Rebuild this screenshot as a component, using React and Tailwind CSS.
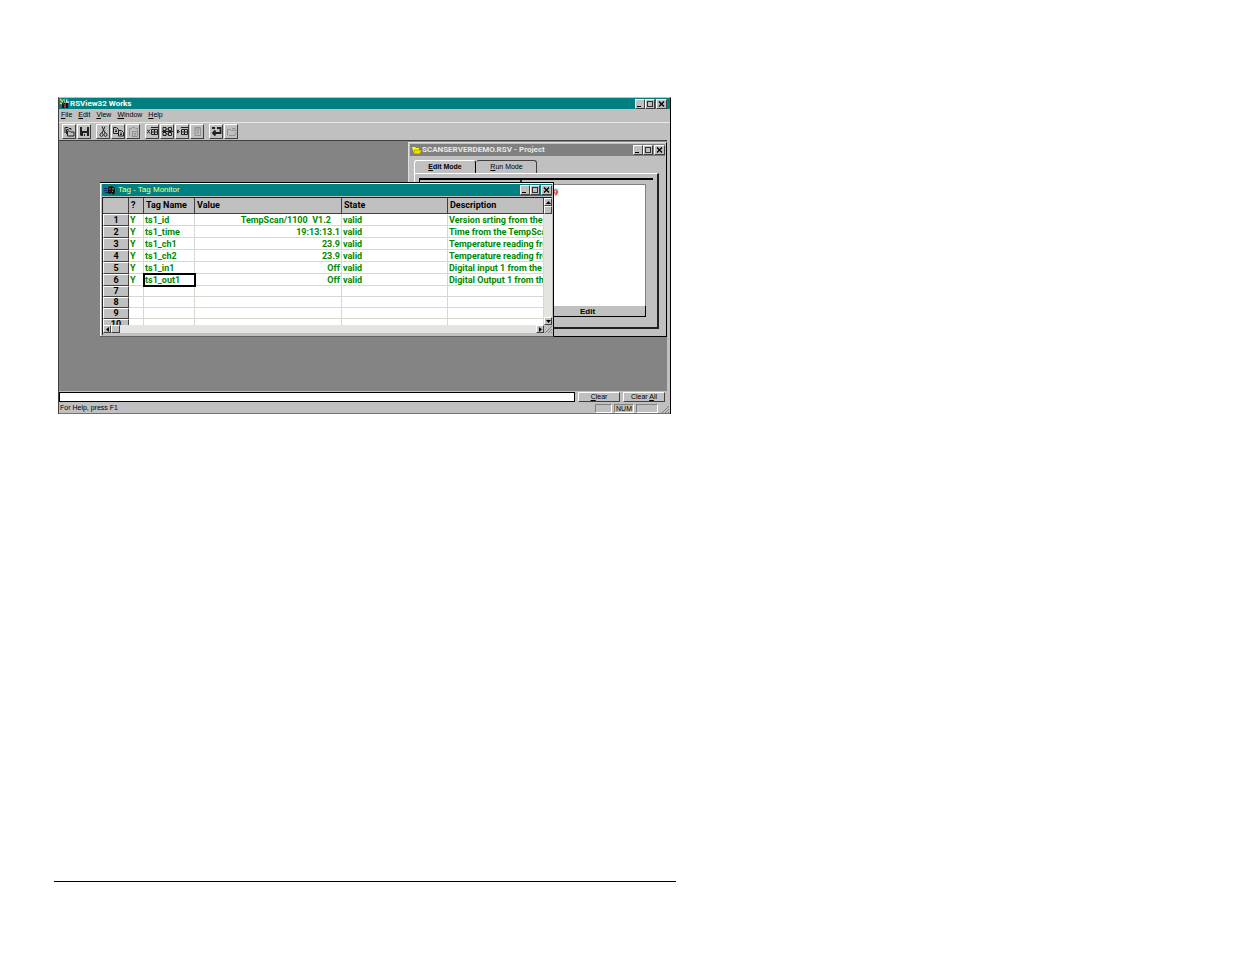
const tags = [
  { name: "ts1_id", value: "TempScan/1100  V1.2", pad: true, description: "Version srting from the" },
  { name: "ts1_time", value: "19:13:13.1", description: "Time from the TempSca" },
  { name: "ts1_ch1", value: "23.9", description: "Temperature reading fro" },
  { name: "ts1_ch2", value: "23.9", description: "Temperature reading fro" },
  { name: "ts1_in1", value: "Off", description: "Digital input 1 from the" },
  { name: "ts1_out1", value: "Off", selected: true, description: "Digital Output 1 from the" },
];

const menus = ["File", "Edit", "View", "Window", "Help"];

const raised = "border border-t-white border-l-white border-r-[#404040] border-b-[#404040] bg-[#c0c0c0]";
const sunken = "border border-t-[#808080] border-l-[#808080] border-r-white border-b-white";

function Hotkey({ text, at = 0 }) {
  return (
    <span>
      {text.slice(0, at)}
      <span className="underline">{text[at]}</span>
      {text.slice(at + 1)}
    </span>
  );
}

function WindowButtons() {
  const button = `flex h-[10px] items-center justify-center ${raised}`;
  return (
    <div className="ml-auto flex items-center">
      <button className={`${button} w-[10px]`} aria-label="Minimize">
        <svg width="8" height="8" shapeRendering="crispEdges"><path d="M1 6h4v1H1z" /></svg>
      </button>
      <button className={`${button} w-[10px]`} aria-label="Maximize">
        <svg width="8" height="8" shapeRendering="crispEdges"><path d="M1 1h6v6H1zM2 2v4h4V2z" fill="#303030" fillRule="evenodd" /></svg>
      </button>
      <button className={`${button} ml-px w-[11px]`} aria-label="Close">
        <svg width="9" height="8"><path d="M2 1.5l5 5M7 1.5l-5 5" stroke="#000" strokeWidth="1.4" /></svg>
      </button>
    </div>
  );
}

function AppIcon() {
  return (
    <svg width="11" height="11" viewBox="0 0 11 11" aria-hidden="true">
      <path d="M1 1l3 3M1 5l3 1" stroke="#e8d060" strokeWidth="1.5" />
      <path d="M3 5h3v5H3zM7 5h2v5H7z" fill="#111" />
      <path d="M5 1v4M8 1L7 5" stroke="#e8e8d0" />
      <path d="M5 6l1 4" stroke="#c03030" />
      <path d="M7 3h3v2H7z" fill="#c0c0c0" />
      <path d="M4 3h1v3H4z" fill="#3040c0" />
    </svg>
  );
}

function TagIcon() {
  return (
    <svg width="12" height="11" viewBox="0 0 12 11" aria-hidden="true">
      <path d="M4 2l3-1 3 1 1 2v4l-2 2-1-2-3 1-1-1z" fill="#101010" />
      <path d="M0 3h3v1H0zM0 5h3v1H0zM1 7h3v1H1z" fill="#202070" />
      <path d="M5 3h2v2H5z" fill="#902020" />
      <path d="M8 3h2v2H8z" fill="#108030" />
      <path d="M5 6h2v1H5z" fill="#2020a0" />
      <path d="M8 6h1v1H8z" fill="#a0a020" />
    </svg>
  );
}

function FolderIcon() {
  return (
    <svg width="11" height="9" viewBox="0 0 11 9" aria-hidden="true">
      <path d="M1 1h3l1 1h3v2h2L9 8H3z" fill="#ffff00" />
      <path d="M3 4h7.500L9 8H3z" fill="#f0e000" stroke="#707000" strokeWidth=".5" />
    </svg>
  );
}

const toolGroups = [
  [
    { label: "Open", icon: <path d="M1 7V1.5h3l1 1h2V4M2.500 8V3.500h2M3.500 10V5h2l1 1h3.500v4z" /> },
    { label: "Save", icon: (
      <>
        <path d="M1 1h9v9H2L1 9z" fill="#202020" stroke="none" />
        <path d="M3 1h5v4H3zM4 7h4v3H4z" fill="#c0c0c0" stroke="none" />
        <path d="M5 8h1v2H5z" fill="#202020" stroke="none" />
      </>
    ) },
  ],
  [
    { label: "Cut", icon: <path d="M4 0.5l3 6.5M7 0.5L4 7M4.5 7.5a1.3 1.5 0 1 0-2 2.5 1.3 1.5 0 0 0 2-2.500M6.500 7.500a1.300 1.500 0 1 1 2 2.500 1.300 1.500 0 0 1-2-2.500" /> },
    { label: "Copy", icon: <path d="M.5 1.500h3l2 2v4h-5zM5.500 4.500h3l2 2v3.500h-5zM2 4h2M2 5.500h2M7 7h2M7 8.500h2" /> },
    { label: "Paste", off: true, icon: <path d="M1.500 9.500v-7h2l1-1h2l1 1h2v2M4.500 5.500h5v5h-5zM6 7.500h2M6 9h2" /> },
  ],
  [
    { label: "Delete tag", icon: <path d="M0 3.500l3 4M3 3.500l-3 4M4.500 3.500h6v5h-6zM4 6h7M7.500 3v6M4 1.500h7" /> },
    { label: "Tag list", icon: <path d="M1 1.500h3v3H1zM6.500 1.500h3v3h-3zM1 6.500h3v3H1zM6.500 6.500h3v3h-3zM4 3h2.500M4 8h2.500M0 5.500h11" /> },
    { label: "Insert tag", icon: <path d="M.5 4l2 1.500L.5 7zM4.500 3.500h6v5h-6zM4 6h7M7.500 3v6M4 1.500h7" /> },
    { label: "Properties", off: true, icon: <path d="M3 1.500h5.500v8H3zM4.500 5h2.500M4.500 7h2.500M3 3h5" /> },
  ],
  [
    { label: "Undo", icon: <path d="M6 2h3.500v5H2M4.500 4.500L2 7l2.500 2.500M1 2h3" strokeWidth="1.800" /> },
    { label: "Redo", off: true, icon: <path d="M1.500 9.500v-6h3l1 1h4M3 9.500h6l1-3M6 2.500h3l1 2" /> },
  ],
];

function Toolbar() {
  return (
    <div className="flex gap-[5px] border-t border-[#e8e8e0] px-[3px] pt-px pb-px">
      {toolGroups.map((group, i) => (
        <div key={i} className="flex gap-px">
          {group.map((tool) => (
            <button key={tool.label} aria-label={tool.label} className={`flex h-[15px] w-[14px] items-center justify-center ${raised}`}>
              <svg width="11" height="11" viewBox="0 0 11 11" fill="none" stroke={tool.off ? "#909090" : "#202020"} strokeWidth="1">
                {tool.icon}
              </svg>
            </button>
          ))}
        </div>
      ))}
    </div>
  );
}

function ProjectWindow() {
  return (
    <section className="absolute top-px right-0 flex h-[195px] w-[259px] flex-col border border-t-[#e0e0e0] border-l-[#e0e0e0] border-r-black border-b-black bg-[#c0c0c0] p-px">
      <header className="flex h-[12px] items-center bg-[#808080] pl-px text-[8px] font-bold text-[#e8e8e8]">
        <FolderIcon />
        <h2 className="font-[Roboto,sans-serif]">SCANSERVERDEMO.RSV - Project</h2>
        <WindowButtons />
      </header>
      <div className="flex flex-1 flex-col pt-[4px] pr-[6px] pb-[6px] pl-[4px]">
        <div className="flex text-[7px]" role="tablist">
          <button role="tab" aria-selected="true" className="h-[13px] w-[62px] rounded-t-[3px] border border-b-0 border-t-white border-l-white border-r-black font-bold">
            <Hotkey text="Edit Mode" />
          </button>
          <button role="tab" aria-selected="false" className="h-[13px] w-[61px] rounded-t-[3px] border border-b-0 border-t-[#404040] border-l-transparent border-r-[#404040]">
            <Hotkey text="Run Mode" />
          </button>
        </div>
        <div className="flex flex-1 border-t border-l border-r-2 border-b-2 border-t-white border-l-white border-r-[#202020] border-b-[#202020] p-[4px]">
          <div className="flex flex-1 border-t-2 border-l border-black">
            <div className="w-[102px] border-r-2 border-[#303030]" />
            <div className="flex flex-1 flex-col pt-[4px] pr-[7px] pb-[6px]">
              <div className="flex-1 border-t border-r border-[#808080] bg-white pt-[3px] pl-[31px]">
                <svg width="6" height="8" viewBox="0 0 6 8" aria-hidden="true">
                  <path d="M0 0h6v8H0z" fill="#d0f0f0" />
                  <path d="M1 2h3v3H1zM4 3v3L2 7" fill="none" stroke="#e03030" />
                </svg>
              </div>
              <button className="h-[12px] border border-t-white border-l-white border-r-black border-b-black pl-[7px] text-[8px] leading-[9px] font-bold">
                Edit
              </button>
            </div>
          </div>
        </div>
      </div>
    </section>
  );
}

function ScrollButton({ label, path }) {
  return (
    <button aria-label={label} className={`flex size-[8px] items-center justify-center ${raised}`}>
      <svg width="5" height="5"><path d={path} /></svg>
    </button>
  );
}

function TagTable() {
  const head = "border-r border-b border-[#404040] px-[2px] pb-px text-left";
  const cell = "overflow-hidden border-r border-b border-[#d8d8d0] px-px";
  const number = "border-r border-b border-t border-l border-t-white border-l-white border-r-[#404040] border-b-[#404040] bg-[#c0c0c0] text-center font-bold text-black";
  return (
    <table className="w-full table-fixed border-separate border-spacing-0 font-[Roboto,sans-serif] text-[9px] leading-[10px] font-bold whitespace-pre text-[#008a00]">
      <colgroup>
        <col className="w-[26px]" />
        <col className="w-[15px]" />
        <col className="w-[51px]" />
        <col className="w-[147px]" />
        <col className="w-[106px]" />
        <col />
      </colgroup>
      <thead>
        <tr className="h-[16px] bg-[#c0c0c0] text-black">
          <th className={head} />
          <th className={head}>?</th>
          <th className={head}>Tag Name</th>
          <th className={head}>Value</th>
          <th className={head}>State</th>
          <th className={head}>Description</th>
        </tr>
      </thead>
      <tbody>
        {tags.map((tag, i) => (
          <tr key={tag.name} className="h-[12px]">
            <th className={number}>{i + 1}</th>
            <td className={cell}>Y</td>
            <td className={`${cell} ${tag.selected ? "outline-2 -outline-offset-1 outline-black" : ""}`}>{tag.name}</td>
            <td className={`${cell} text-right ${tag.pad ? "pr-[10px]" : ""}`}>{tag.value}</td>
            <td className={cell}>valid</td>
            <td className={cell}>{tag.description}</td>
          </tr>
        ))}
        {[7, 8, 9, 10].map((n) => (
          <tr key={n} className="h-[11px] leading-[9px]">
            <th className={number}>{n}</th>
            <td className={cell} />
            <td className={cell} />
            <td className={cell} />
            <td className={cell} />
            <td className={cell} />
          </tr>
        ))}
      </tbody>
    </table>
  );
}

function TagMonitor() {
  return (
    <section className="absolute top-[41px] left-[41px] flex h-[155px] w-[454px] flex-col border-t border-r border-t-black border-r-black border-b border-b-[#606060] bg-[#c0c0c0]">
      <div className="flex flex-1 flex-col border-t border-l border-white px-px pb-px">
        <header className="flex h-[12px] items-center gap-[2px] bg-[#008080] pl-[2px] text-[8px] text-[#ffff80]">
          <TagIcon />
          <h2>Tag - Tag Monitor</h2>
          <WindowButtons />
        </header>
        <div className="mt-px flex flex-1 flex-col border-t border-l border-[#202020]">
          <div className="flex">
            <div className="h-[127px] flex-1 overflow-hidden bg-white">
              <TagTable />
            </div>
            <div className="flex w-[8px] flex-col bg-[#e4e4e0]">
              <ScrollButton label="Scroll up" path="M0 4h5L2.500 1z" />
              <div className={`h-[8px] ${raised}`} />
              <div className="mt-auto"><ScrollButton label="Scroll down" path="M0 1h5L2.500 4z" /></div>
            </div>
          </div>
          <div className="flex h-[8px] bg-[#e4e4e0]">
            <ScrollButton label="Scroll left" path="M4 0v5L1 2.500z" />
            <div className={`w-[9px] ${raised}`} />
            <div className="ml-auto flex">
              <ScrollButton label="Scroll right" path="M1 0v5L4 2.500z" />
              <svg width="8" height="8" className="bg-[#c0c0c0]" stroke="#808080"><path d="M1 8l7-7M4 8l4-4M7 8l1-1" /></svg>
            </div>
          </div>
        </div>
      </div>
    </section>
  );
}

function StatusBar() {
  return (
    <footer className="flex h-[11px] items-center gap-[2px] border-b border-[#707080] pl-px text-[7px]">
      <p className="mr-auto">For Help, press F1</p>
      <span className={`h-[9px] w-[17px] ${sunken}`} />
      <span className={`h-[9px] w-[20px] text-center leading-[8px] ${sunken}`}>NUM</span>
      <span className={`h-[9px] w-[22px] ${sunken}`} />
      <svg width="10" height="9" stroke="#808080"><path d="M2 9l7-7M5 9l4-4M8 9l1-1" /></svg>
    </footer>
  );
}

export default function App() {
  return (
    <div className="flex min-h-screen flex-col bg-white pt-[97px] pb-[72px] pl-[54px] font-['Liberation_Sans',Arial,sans-serif] text-black">
      <main className="max-w-[622px] pr-[5px] pl-1">
        <div className="border-t border-r border-l border-t-[#c0c0c0] border-r-black border-l-[#404040] bg-[#c0c0c0]">
          <header className="flex h-[11px] items-center bg-[#008080] pr-[3px] text-[8px] font-bold text-white">
            <AppIcon />
            <h1 className="font-[Roboto,sans-serif]">RSView32 Works</h1>
            <WindowButtons />
          </header>
          <nav className="flex h-[13px] items-center gap-[6px] pl-[2px] text-[7px]">
            {menus.map((menu) => (
              <button key={menu}><Hotkey text={menu} /></button>
            ))}
          </nav>
          <Toolbar />
          <div className="relative mr-[3px] h-[251px] overflow-hidden border-t border-[#404040] bg-[#848484]">
            <ProjectWindow />
            <TagMonitor />
          </div>
          <div className="flex h-[12px] items-center gap-[3px] pr-[5px] text-[7px]">
            <input aria-label="Command line" className="h-[10px] min-w-0 flex-1 border border-black bg-white" />
            <button className={`h-[10px] w-[42px] leading-[8px] ${raised}`}><Hotkey text="Clear" /></button>
            <button className={`h-[10px] w-[42px] leading-[8px] ${raised}`}><Hotkey text="Clear All" at={6} /></button>
          </div>
          <StatusBar />
        </div>
      </main>
      <hr className="mt-auto w-full max-w-[622px] border-t border-black" />
    </div>
  );
}
